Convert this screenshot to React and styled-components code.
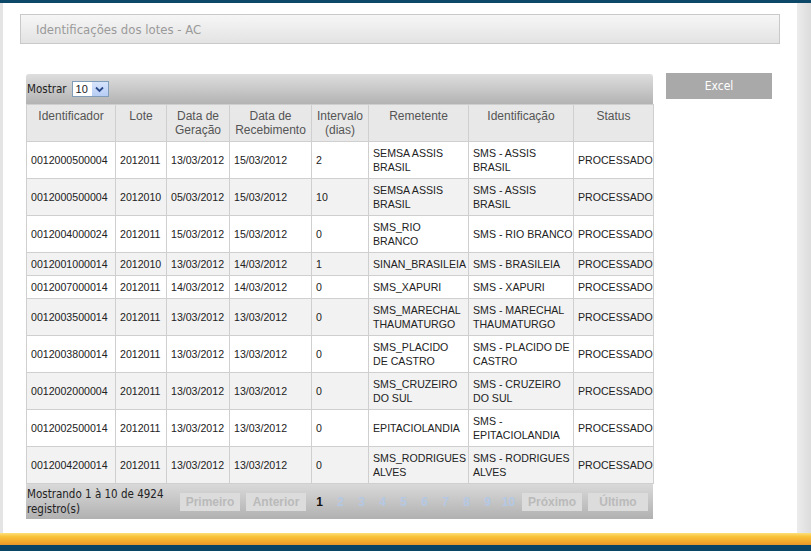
import React from "react";
import styled, { createGlobalStyle } from "styled-components";

const rows = [
  ["0012000500004", "2012011", "13/03/2012", "15/03/2012", "2", "SEMSA ASSIS\nBRASIL", "SMS - ASSIS\nBRASIL"],
  ["0012000500004", "2012010", "05/03/2012", "15/03/2012", "10", "SEMSA ASSIS\nBRASIL", "SMS - ASSIS\nBRASIL"],
  ["0012004000024", "2012011", "15/03/2012", "15/03/2012", "0", "SMS_RIO\nBRANCO", "SMS - RIO BRANCO"],
  ["0012001000014", "2012010", "13/03/2012", "14/03/2012", "1", "SINAN_BRASILEIA", "SMS - BRASILEIA"],
  ["0012007000014", "2012011", "14/03/2012", "14/03/2012", "0", "SMS_XAPURI", "SMS - XAPURI"],
  ["0012003500014", "2012011", "13/03/2012", "13/03/2012", "0", "SMS_MARECHAL\nTHAUMATURGO", "SMS - MARECHAL\nTHAUMATURGO"],
  ["0012003800014", "2012011", "13/03/2012", "13/03/2012", "0", "SMS_PLACIDO\nDE CASTRO", "SMS - PLACIDO DE\nCASTRO"],
  ["0012002000004", "2012011", "13/03/2012", "13/03/2012", "0", "SMS_CRUZEIRO\nDO SUL", "SMS - CRUZEIRO\nDO SUL"],
  ["0012002500014", "2012011", "13/03/2012", "13/03/2012", "0", "EPITACIOLANDIA", "SMS -\nEPITACIOLANDIA"],
  ["0012004200014", "2012011", "13/03/2012", "13/03/2012", "0", "SMS_RODRIGUES\nALVES", "SMS - RODRIGUES\nALVES"],
];

const columns = [
  { label: "Identificador", width: 89 },
  { label: "Lote", width: 51 },
  { label: "Data de\nGeração", width: 63 },
  { label: "Data de\nRecebimento", width: 82 },
  { label: "Intervalo\n(dias)", width: 57 },
  { label: "Remetente", width: 100 },
  { label: "Identificação", width: 105 },
  { label: "Status", width: 80 },
];

const pages = ["2", "3", "4", "5", "6", "7", "8", "9", "10"];

const GlobalStyle = createGlobalStyle`
  html, body {
    margin: 0;
    padding: 0;
    background: #e6e6e6;
    overflow: hidden;
  }
`;

const App = () => {
  return (
    <>
      <GlobalStyle />
      <Page>
        <TopBar />
        <Frame>
          <Main>
            <TitleBox>
              <Title>Identificações dos lotes - AC</Title>
            </TitleBox>
            <ContentRow>
              <TableBlock>
                <Toolbar>
                  <ToolbarLabel>Mostrar</ToolbarLabel>
                  <FakeSelect>
                    <SelectValue>10</SelectValue>
                    <SelectArrow>
                      <svg width="9" height="7" viewBox="0 0 9 7">
                        <path d="M1 1.5 L4.5 5 L8 1.5" fill="none" stroke="#2b4a8a" strokeWidth="1.8" />
                      </svg>
                    </SelectArrow>
                  </FakeSelect>
                </Toolbar>
                <Table>
                  <colgroup>
                    {columns.map((c) => (
                      <col key={c.label} style={{ width: c.width }} />
                    ))}
                  </colgroup>
                  <thead>
                    <tr>
                      {columns.map((c) => (
                        <Th key={c.label}>{c.label}</Th>
                      ))}
                    </tr>
                  </thead>
                  <tbody>
                    {rows.map((r, i) => (
                      <Tr key={i} $even={i % 2 === 1}>
                        {r.map((v, j) => (
                          <Td key={j}>{v}</Td>
                        ))}
                        <Td>PROCESSADO</Td>
                      </Tr>
                    ))}
                  </tbody>
                </Table>
                <Footer>
                  <Info>
                    Mostrando 1 à 10 de 4924
                    <br />
                    registro(s)
                  </Info>
                  <Pager>
                    <PageButton>Primeiro</PageButton>
                    <PageButton>Anterior</PageButton>
                    <PageNum $current>1</PageNum>
                    {pages.map((p) => (
                      <PageNum key={p}>{p}</PageNum>
                    ))}
                    <PageButton>Próximo</PageButton>
                    <PageButton>Último</PageButton>
                  </Pager>
                </Footer>
              </TableBlock>
              <ExcelButton>Excel</ExcelButton>
            </ContentRow>
          </Main>
          <ScrollStrip />
        </Frame>
        <OrangeBar />
        <BottomBar />
      </Page>
    </>
  );
};

export default App;

const Page = styled.div`
  width: 811px;
  height: 551px;
  display: flex;
  flex-direction: column;
  font-family: "Liberation Sans", Arial, sans-serif;
`;

const TopBar = styled.div`
  height: 3px;
  background: #0d4868;
`;

const Frame = styled.div`
  flex: 1;
  display: flex;
  padding-left: 3px;
  background: #e4e4e4;
  min-height: 0;
`;

const Main = styled.div`
  width: 794px;
  background: #fff;
  padding-top: 11px;
  box-sizing: border-box;
  overflow: hidden;
`;

const ScrollStrip = styled.div`
  flex: 1;
  background: linear-gradient(to right, #ececec, #dcdcdc);
`;

const TitleBox = styled.div`
  margin-left: 17px;
  width: 760px;
  height: 30px;
  box-sizing: border-box;
  border: 1px solid #c9c9c9;
  background: linear-gradient(#f6f6f6, #e3e3e3);
  display: flex;
  align-items: center;
  padding-left: 15px;
`;

const Title = styled.div`
  font-family: "DejaVu Sans Condensed", "Liberation Sans Narrow", sans-serif;
  font-size: 13px;
  color: #9a9a9a;
`;

const ContentRow = styled.div`
  display: flex;
  align-items: flex-start;
  margin-top: 29px;
  margin-left: 23px;
  gap: 13px;
`;

const TableBlock = styled.div`
  width: 627px;
  margin-top: 1px;
`;

const Toolbar = styled.div`
  height: 30px;
  display: flex;
  align-items: center;
  gap: 5px;
  padding-left: 1px;
  background: linear-gradient(#dedede, #b3b3b3);
  border-radius: 3px 3px 0 0;
`;

const ToolbarLabel = styled.span`
  font-family: "DejaVu Sans Condensed", "Liberation Sans Narrow", sans-serif;
  font-size: 11.5px;
  color: #222;
`;

const FakeSelect = styled.div`
  width: 37px;
  height: 16px;
  box-sizing: border-box;
  border: 1px solid #7f9db9;
  background: #fff;
  display: flex;
  align-items: center;
  justify-content: space-between;
  overflow: hidden;
`;

const SelectValue = styled.span`
  font-size: 11px;
  color: #222;
  padding-left: 3px;
  width: 12px;
  overflow: hidden;
  white-space: nowrap;
`;

const SelectArrow = styled.span`
  width: 16px;
  height: 14px;
  background: linear-gradient(#d7e4fb, #b7cdf5);
  display: flex;
  align-items: center;
  justify-content: center;
`;

const Table = styled.table`
  width: 627px;
  table-layout: fixed;
  border-collapse: collapse;
  font-size: 10.6px;
`;

const Th = styled.th`
  border: 1px solid #cfcfcf;
  background: #e8e8e8;
  color: #555;
  font-size: 12px;
  font-weight: normal;
  vertical-align: top;
  text-align: center;
  white-space: pre-line;
  padding: 4px 2px 4px;
  height: 28px;
  line-height: 14px;
`;

const Tr = styled.tr`
  background: ${(p) => (p.$even ? "#f2f2f2" : "#fff")};
`;

const Td = styled.td`
  border: 1px solid #cfcfcf;
  color: #222;
  padding: 4px 2px 4px 4px;
  line-height: 14px;
  vertical-align: middle;
  white-space: pre;
  overflow: hidden;
`;

const Footer = styled.div`
  height: 35px;
  display: flex;
  align-items: center;
  background: linear-gradient(#d9d9d9, #b1b1b1);
`;

const Info = styled.div`
  padding-left: 1px;
  font-family: "DejaVu Sans Condensed", "Liberation Sans Narrow", sans-serif;
  font-size: 11.5px;
  line-height: 15px;
  white-space: nowrap;
  color: #222;
`;

const Pager = styled.div`
  display: flex;
  align-items: center;
  gap: 6px;
  margin-left: auto;
  padding-right: 5px;
`;

const PageButton = styled.span`
  width: 60px;
  height: 18px;
  display: flex;
  align-items: center;
  justify-content: center;
  background: #dcdcdc;
  color: #bababa;
  font-size: 12px;
  font-weight: bold;
`;

const PageNum = styled.span`
  width: 15px;
  text-align: center;
  font-size: 12px;
  font-weight: bold;
  color: ${(p) => (p.$current ? "#111" : "#b4c8e4")};
`;

const ExcelButton = styled.div`
  width: 106px;
  height: 26px;
  background: #a9a9a9;
  color: #fff;
  font-family: "DejaVu Sans Condensed", "Liberation Sans Narrow", sans-serif;
  font-size: 12px;
  display: flex;
  align-items: center;
  justify-content: center;
`;

const OrangeBar = styled.div`
  height: 12px;
  background: linear-gradient(#fde07a 0%, #f9c23a 30%, #f3a52a 80%, #e9952b 100%);
`;

const BottomBar = styled.div`
  height: 6px;
  background: #0b4464;
`;
